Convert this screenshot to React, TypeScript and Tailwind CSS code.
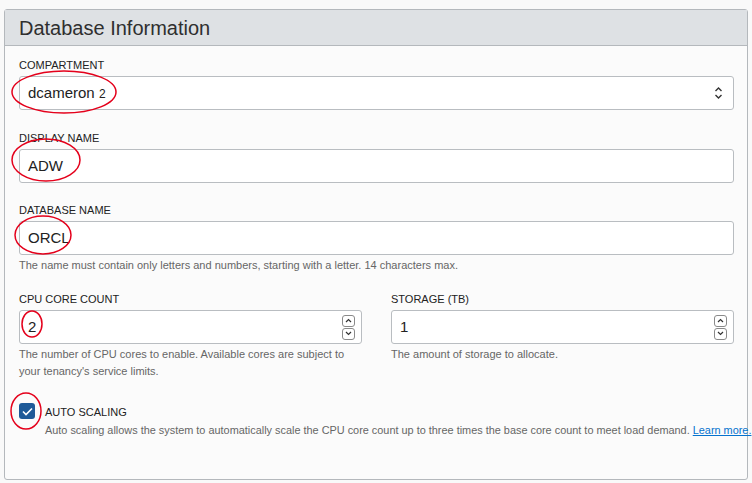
import React from "react";

function Spinner() {
  return (
    <div className="flex flex-col gap-[1px]">
      <span className="flex h-[12px] w-[13px] items-center justify-center rounded-[3px] border border-[#8a8a8a] bg-white">
        <svg width="7" height="5" viewBox="0 0 7 5" fill="none">
          <path d="M1 4L3.5 1.5L6 4" stroke="#333" strokeWidth="1.2" />
        </svg>
      </span>
      <span className="flex h-[12px] w-[13px] items-center justify-center rounded-[3px] border border-[#8a8a8a] bg-white">
        <svg width="7" height="5" viewBox="0 0 7 5" fill="none">
          <path d="M1 1L3.5 3.5L6 1" stroke="#333" strokeWidth="1.2" />
        </svg>
      </span>
    </div>
  );
}

function Label({ children }: { children: React.ReactNode }) {
  return <div className="mb-[4px] text-[11px] leading-[14px] text-[#222]">{children}</div>;
}

function Help({ children }: { children: React.ReactNode }) {
  return <div className="mt-[2px] text-[11px] leading-[17px] text-[#666]">{children}</div>;
}

const box =
  "flex h-[34px] items-center rounded-[3px] border border-[#b9bdc1] bg-white px-[8px] text-[15px] text-[#222]";

export default function App() {
  return (
    <div
      className="relative h-[483px] w-[752px] overflow-hidden bg-[#f9f9f9] pl-[4px] pt-[9px]"
      style={{ fontFamily: '"Liberation Sans", Arial, sans-serif' }}
    >
      <div className="h-[471px] w-[744px] rounded-[3px] border border-[#b4b8bc] bg-[#fbfbfb]">
        <div className="flex h-[36px] items-center border-b border-[#b4b8bc] bg-[#dee1e4] px-[14px] text-[20px] text-[#2f2f2f]">
          Database Information
        </div>

        <div className="w-[729px] pl-[14px] pt-[12px]">
          <Label>COMPARTMENT</Label>
          <div className={`${box} justify-between`}>
            <span>
              dcameron <span className="text-[12px]">2</span>
            </span>
            <svg width="9" height="14" viewBox="0 0 9 14" fill="none" className="mr-[2px]">
              <path d="M1.5 5L4.5 2L7.5 5" stroke="#333" strokeWidth="1.4" />
              <path d="M1.5 9L4.5 12L7.5 9" stroke="#333" strokeWidth="1.4" />
            </svg>
          </div>

          <div className="mt-[21px]">
            <Label>DISPLAY NAME</Label>
            <div className={box}>ADW</div>
          </div>

          <div className="mt-[20px]">
            <Label>DATABASE NAME</Label>
            <div className={box}>ORCL</div>
            <Help>The name must contain only letters and numbers, starting with a letter. 14 characters max.</Help>
          </div>

          <div className="mt-[18px] grid grid-cols-2 gap-[29px]">
            <div>
              <Label>CPU CORE COUNT</Label>
              <div className={`${box} justify-between pr-[6px]`}>
                <span>2</span>
                <Spinner />
              </div>
              <Help>
                The number of CPU cores to enable. Available cores are subject to
                <br />
                your tenancy's service limits.
              </Help>
            </div>
            <div>
              <Label>STORAGE (TB)</Label>
              <div className={`${box} justify-between pr-[6px]`}>
                <span>1</span>
                <Spinner />
              </div>
              <Help>The amount of storage to allocate.</Help>
            </div>
          </div>

          <div className="mt-[22px] flex items-start gap-[10px]">
            <span className="mt-[1px] flex h-[16px] w-[16px] shrink-0 items-center justify-center rounded-[3px] bg-[#1e5a98]">
              <svg width="11" height="9" viewBox="0 0 11 9" fill="none">
                <path d="M1 4.5L4 7.5L10 1.5" stroke="#fff" strokeWidth="1.6" />
              </svg>
            </span>
            <div>
              <div className="text-[11px] leading-[20px] text-[#222]">AUTO SCALING</div>
              <div className="whitespace-nowrap text-[10.9px] leading-[17px] text-[#666]">
                Auto scaling allows the system to automatically scale the CPU core count up to three times the base core count to meet load demand.{" "}
                <span className="text-[#0572ce] underline">Learn more.</span>
              </div>
            </div>
          </div>
        </div>
      </div>

      <svg className="pointer-events-none absolute left-0 top-0" width="752" height="483" fill="none">
        <ellipse cx="64" cy="92" rx="52" ry="21" stroke="#e4001b" strokeWidth="1.5" />
        <ellipse cx="46" cy="160" rx="34" ry="21" stroke="#e4001b" strokeWidth="1.5" />
        <ellipse cx="43" cy="235" rx="28" ry="19" stroke="#e4001b" strokeWidth="1.5" />
        <ellipse cx="32" cy="324" rx="10" ry="13" stroke="#e4001b" strokeWidth="1.5" />
        <ellipse cx="26" cy="411" rx="15" ry="18" stroke="#e4001b" strokeWidth="1.5" />
      </svg>
    </div>
  );
}
